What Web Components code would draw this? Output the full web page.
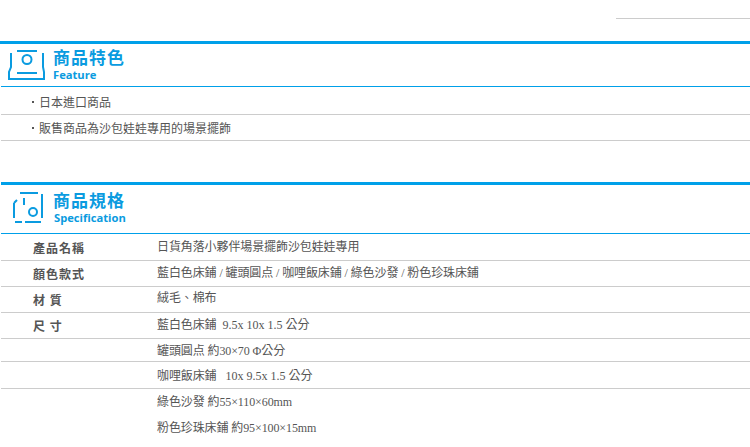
<!DOCTYPE html>
<html lang="zh-Hant">
<head>
<meta charset="utf-8">
<title>商品</title>
<style>
  html, body { margin: 0; background: #fff; }
  body {
    font: 12px/16px "Liberation Serif", "Noto Sans CJK TC", serif;
    color: #555;
    overflow: hidden;
  }
  .list-feature { padding-top: 2px; }
  .list-spec { padding-top: 1px; }
  .size { letter-spacing: 0; }
</style>
</head>
<body>
<template id="section-head-tpl">
  <style>
    :host { display: block; --head-h: 42px; --head-top: 3px; }
    :host([tall]) { --head-h: 48px; --head-top: 5px; }
    .bar { height: 3px; background: #00a0e9; }
    :host([tall]) .bar { margin-left: 1px; }
    .head {
      display: flex;
      align-items: flex-start;
      height: var(--head-h);
      margin-left: 1px;
      border-bottom: 1px solid #00a0e9;
    }
    .icon { width: 52px; height: 41px; flex: none; margin: 0 1px 0 -1px; }
    .text { padding-top: var(--head-top); }
    .title {
      font: bold 17px/20px "Noto Sans CJK TC", sans-serif;
      color: #0a9be0;
      letter-spacing: 1px;
    }
    .sub {
      font: bold 11.2px/14px "Open Sans", sans-serif;
      color: #0a9be0;
      margin-top: 1px;
    }
    :host([tall]) .sub { margin-left: 1px; }
  </style>
  <div class="bar"></div>
  <div class="head">
    <div class="icon"><slot name="icon"></slot></div>
    <div class="text">
      <div class="title"><slot name="title"></slot></div>
      <div class="sub"><slot name="sub"></slot></div>
    </div>
  </div>
</template>

<template id="feature-row-tpl">
  <style>
    :host {
      display: flex;
      align-items: center;
      height: 25px;
      margin-left: 1px;
      padding-left: 31px;
      border-bottom: 1px solid #ccc;
      font-family: "Noto Sans CJK TC", sans-serif;
      white-space: nowrap;
    }
    .dot { width: 2px; height: 2px; margin-right: 5px; background: #555; flex: none; }
  </style>
  <span class="dot"></span><slot></slot>
</template>

<template id="spec-row-tpl">
  <style>
    :host {
      display: grid;
      grid-template-columns: 124px 1fr;
      height: var(--row-h, 25px);
      line-height: var(--row-h, 25px);
      margin-left: 1px;
      padding-left: 32px;
      border-bottom: 1px solid #ccc;
      white-space: nowrap;
    }
    :host([plain]) { border-bottom-color: transparent; }
    .label {
      font: bold 12px/25px "Noto Sans CJK TC", sans-serif;
      letter-spacing: 1px;
      white-space: pre;
    }
    .value { letter-spacing: -.1px; }
    :host([raised]) .value { margin-top: -1px; }
    :host([lowered]) .value { margin-top: 1px; }
  </style>
  <div class="label"><slot name="label"></slot></div>
  <div class="value"><slot></slot></div>
</template>

<div style="height:41px"><top-rule></top-rule></div>

<section-head>
  <svg slot="icon" width="52" height="41" viewBox="0 0 52 41" fill="none" stroke="#0a9be0" stroke-width="2">
    <path d="M17 7h20M11 9v14l-2 5v7h35v-7l-1-5v-14M17 29h20"/>
    <circle cx="27" cy="15.500" r="4.500"/>
  </svg>
  <span slot="title">商品特色</span>
  <span slot="sub">Feature</span>
</section-head>
<div class="list-feature">
  <feature-row>日本進口商品</feature-row>
  <feature-row>販售商品為沙包娃娃專用的場景擺飾</feature-row>
</div>

<div style="height:41px"></div>

<section-head tall>
  <svg slot="icon" width="52" height="41" viewBox="0 0 52 41" fill="none" stroke="#0a9be0" stroke-width="2">
    <path d="M20 8h18M42 9v24M14 18v15M14 18l3-3M24 13v7M15 37h7M25 37h16"/>
    <circle cx="33" cy="27" r="4"/>
  </svg>
  <span slot="title">商品規格</span>
  <span slot="sub">Specification</span>
</section-head>
<div class="list-spec">
  <spec-row><span slot="label">產品名稱</span>日貨角落小夥伴場景擺飾沙包娃娃專用</spec-row>
  <spec-row><span slot="label">顏色款式</span>藍白色床鋪 / 罐頭圓点 / 咖哩飯床鋪 / 綠色沙發 / 粉色珍珠床鋪</spec-row>
  <spec-row raised><span slot="label">材 質</span>絨毛、棉布</spec-row>
  <spec-row><span slot="label">尺 寸</span>藍白色床鋪<span class="size">&nbsp; 9.5x 10x 1.5 </span>公分</spec-row>
  <spec-row lowered style="--row-h:22px">罐頭圓点 約30×70 Φ公分</spec-row>
  <spec-row lowered style="--row-h:26px">咖哩飯床鋪<span class="size"> &nbsp; 10x 9.5x 1.5 </span>公分</spec-row>
  <spec-row lowered plain>綠色沙發 約55×110×60mm</spec-row>
  <spec-row lowered plain>粉色珍珠床鋪 約95×100×15mm</spec-row>
</div>

<script>
  /**
   * Defines an element whose shadow root is cloned from a template.
   */
  function defineFromTemplate(tag, tplId) {
    customElements.define(tag, class extends HTMLElement {
      constructor() {
        super();
        const tpl = document.getElementById(tplId);
        this.attachShadow({ mode: 'open' }).appendChild(tpl.content.cloneNode(true));
      }
    });
  }

  defineFromTemplate('section-head', 'section-head-tpl');
  defineFromTemplate('feature-row', 'feature-row-tpl');
  defineFromTemplate('spec-row', 'spec-row-tpl');

  /**
   * The short grey rule at the top right of the page.
   */
  class TopRule extends HTMLElement {
    constructor() {
      super();
      this.attachShadow({ mode: 'open' }).innerHTML = /*html*/`
        <style>
          :host { display: block; padding-top: 18px; }
          div { margin-left: auto; width: 134px; height: 1px; background: #ccc; }
        </style>
        <div></div>
      `;
    }
  }
  customElements.define('top-rule', TopRule);
</script>
</body>
</html>
